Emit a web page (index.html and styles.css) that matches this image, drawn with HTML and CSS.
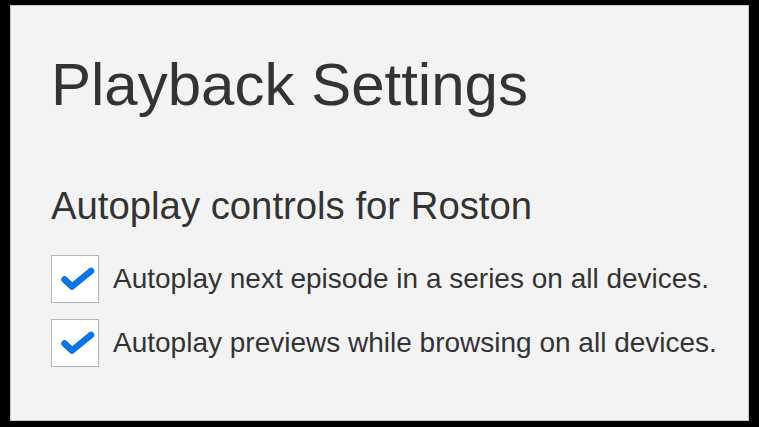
FILE: index.html
```html
<!DOCTYPE html>
<html lang="en">
<head>
    <meta charset="UTF-8">
    <meta name="viewport" content="width=device-width, initial-scale=1.0">
    <title>Playback Settings</title>
    <link rel="stylesheet" href="styles.css">
</head>
<body>
    <div class="panel">
        <h1>Playback Settings</h1>

        <h2>Autoplay controls for Roston</h2>

        <div class="option">
            <span class="check">
                <svg viewBox="0 0 46 46" width="46" height="46"><path d="M12.5 23.5 L20 30.5 L39 15" fill="none" stroke="#0a73e6" stroke-width="6.5" stroke-linecap="round" stroke-linejoin="round"/></svg>
            </span>
            <span class="label">Autoplay next episode in a series on all devices.</span>
        </div>
        <div class="option">
            <span class="check">
                <svg viewBox="0 0 46 46" width="46" height="46"><path d="M12.5 23.5 L20 30.5 L39 15" fill="none" stroke="#0a73e6" stroke-width="6.5" stroke-linecap="round" stroke-linejoin="round"/></svg>
            </span>
            <span class="label">Autoplay previews while browsing on all devices.</span>
        </div>
    </div>
</body>
</html>
```

FILE: styles.css
```css
html, body {
    margin: 0;
    height: 100%;
}
body {
    background: #000;
    padding: 5px 10px 6px 10px;
    box-sizing: border-box;
    font-family: "Liberation Sans", Arial, sans-serif;
    color: #333;
}
.panel {
    background: #f3f3f3;
    border: 1px solid #c8c8c8;
    height: 100%;
    box-sizing: border-box;
    padding: 46px 0 0 40px;
}
h1 {
    font-size: 60px;
    font-weight: normal;
    margin: 0;
    line-height: 66px;
}
h2 {
    font-size: 38.3px;
    font-weight: normal;
    margin: 66px 0 0 0;
    line-height: 44px;
}
.option {
    display: flex;
    align-items: center;
    margin-top: 27px;
}
.option + .option {
    margin-top: 16px;
}
.check {
    width: 46px;
    height: 46px;
    background: #fff;
    border: 1px solid #b5b5b5;
    display: flex;
    align-items: center;
    justify-content: center;
    flex-shrink: 0;
}
.check svg {
    display: block;
}
.label {
    font-size: 28px;
    margin-left: 14px;
}
```
